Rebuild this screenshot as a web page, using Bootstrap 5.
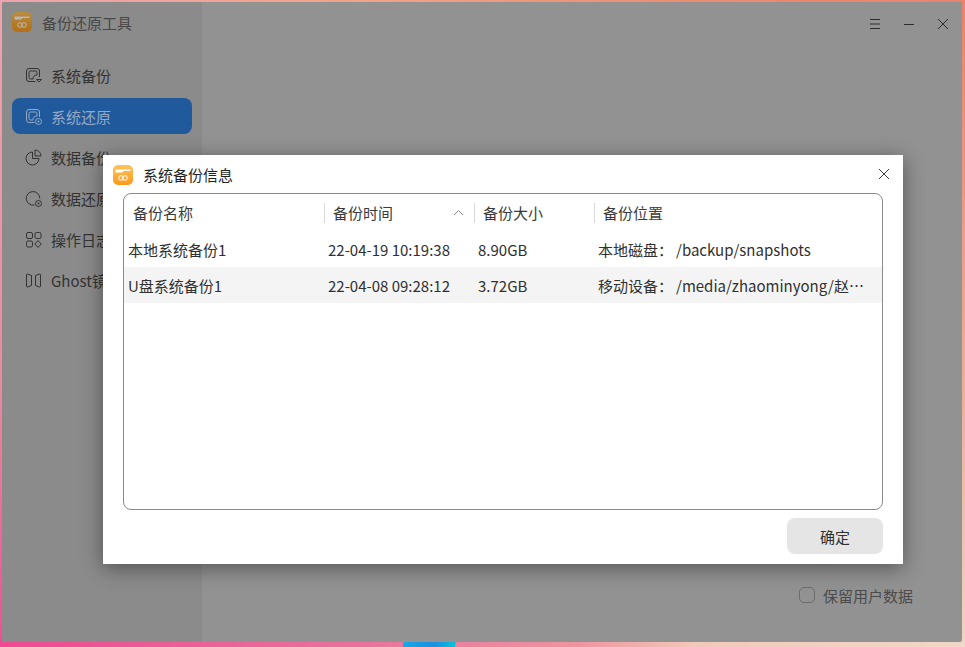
<!DOCTYPE html>
<html lang="zh-CN">

<head>
    <meta charset="UTF-8">
    <meta name="viewport" content="width=device-width, initial-scale=1.0">
    <title>备份还原工具</title>
    <link href="https://cdn.jsdelivr.net/npm/bootstrap@5.3.1/dist/css/bootstrap.min.css" rel="stylesheet">
    <style>
        html, body { height: 100%; }
        body {
            margin: 0;
            overflow: hidden;
            font-family: "Noto Sans CJK SC", "Noto Sans", sans-serif;
            font-size: 15px;
            background:
                linear-gradient(100deg, transparent 41.8%, #14a9e4 41.8%, #1a8fe0 45%, #08c3dc 47.2%, transparent 47.2%) left bottom / 100% 5px no-repeat,
                linear-gradient(90deg, #ee4a93 0%, #e9739c 38%, #ee94a0 60%, #f2c9b8 72%, #f1d8c6 100%) left bottom / 100% 8px no-repeat,
                linear-gradient(90deg, #eea3ae 0%, #f0a58a 35%, #ec8d70 70%, #e8836e 100%) left top / 100% 8px no-repeat,
                linear-gradient(180deg, #efa4ac 0%, #e88aa0 60%, #ee4f92 100%) left top / 3px 100% no-repeat,
                linear-gradient(180deg, #e8836e 0%, #e8b09a 60%, #f0d3c0 100%) right top / 3px 100% no-repeat;
        }
        .app-window {
            position: relative;
            margin: 2px 3px 5px 2px;
            height: 640px;
            border-radius: 2px;
            background: #929292;
        }
        .side-pane { width: 200px; background: #8b8b8b; }
        .app-title { height: 42px; padding: 0 0 0 10px; gap: 10px; color: #474747; }
        .app-logo-dim { margin-bottom: 2px; filter: brightness(.72); }
        .side-item { height: 36px; margin: 0 10px 5px; padding-left: 13px; gap: 9px; border-radius: 8px; color: #333; white-space: nowrap; }
        .side-item svg { flex: none; }
        .side-item span { padding-top: 2px; }
        .side-item.is-current { background: #20599c; color: #93a9c6; }
        .side-menu { padding-top: 13px; }
        .win-btns { height: 44px; padding-right: 2px; }
        .win-btn { width: 34px; height: 44px; color: #2d2d2d; }
        .keep-data { gap: 8px; padding: 0 49px 35px 0; color: #4b4b4b; }
        .keep-data span { padding-top: 2px; }
        .keep-box { width: 16px; height: 16px; border: 1px solid #6c6c6c; border-radius: 5px; }
        .info-dialog {
            position: absolute;
            left: 101px;
            top: 153px;
            width: 800px;
            height: 409px;
            background: #fff;
            box-shadow: 0 4px 20px rgba(0, 0, 0, .42);
            color: #2f2f2f;
        }
        .dlg-head { height: 38px; padding: 0 13px 0 10px; gap: 10px; color: #1f1f1f; }
        .dlg-logo { margin-top: 2px; }
        .dlg-title { padding-top: 2px; }
        .dlg-frame {
            margin: 0 20px;
            height: 317px;
            border: 1px solid #8a8a8a;
            border-radius: 8px;
            overflow: hidden;
        }
        .backup-grid { table-layout: fixed; width: 100%; margin: 0; }
        .backup-grid th, .backup-grid td { padding: 0; font-weight: 400; white-space: nowrap; }
        .backup-grid th { height: 37px; color: #3a3a3a; }
        .head-cell { height: 20px; padding: 2px 0 0 8px; border-left: 1px solid #d9d9d9; }
        .head-cell.is-first { border-left: 0; padding-left: 9px; }
        .backup-grid td { height: 36px; padding: 2px 0 0 4px; color: #303030; overflow: hidden; }
        .backup-grid tr.is-alt td { background: #f4f4f4; }
        .place-label { display: inline-block; width: 78px; }
        .sort-mark { margin: -2px 10px 0 0; }
        .ok-btn { width: 96px; height: 36px; margin: 8px 20px 0 0; background: #e5e5e5; border: 0; border-radius: 8px; color: #2f2f2f; font-size: 15px; padding: 2px 0 0; }
    </style>
</head>

<body>
    <svg width="0" height="0" class="d-block">
        <defs>
            <linearGradient id="logoBg" x1="0" y1="0" x2="0" y2="1">
                <stop offset="0" stop-color="#ffc45a" />
                <stop offset="1" stop-color="#fb9a1c" />
            </linearGradient>
            <symbol id="appLogo" viewBox="0 0 20 20">
                <rect width="20" height="20" rx="5" fill="url(#logoBg)" />
                <path d="M2.5 4.500h15v1.600h-7l-1.200 1.500H2.500z" fill="#fff" />
                <circle cx="8" cy="13" r="2.300" fill="none" stroke="#fff" stroke-width="1" />
                <circle cx="12" cy="13" r="2.300" fill="none" stroke="#fff" stroke-width="1" />
            </symbol>
        </defs>
    </svg>

    <div class="app-window d-flex overflow-hidden">
        <div class="side-pane d-flex flex-column">
            <div class="app-title d-flex align-items-center">
                <svg width="20" height="20" class="app-logo-dim"><use href="#appLogo" /></svg>
                <span>备份还原工具</span>
            </div>
            <div class="side-menu">
                <div class="side-item d-flex align-items-center">
                    <svg width="17" height="17" viewBox="0 0 17 17" fill="none" stroke="currentColor"><path d="M10.500 14.500H4A2.500 2.500 0 0 1 1.500 12V4A2.500 2.500 0 0 1 4 1.500h8A2.500 2.500 0 0 1 14.500 4v6" /><path d="M8 12H5.500A1.500 1.500 0 0 1 4 10.500v-5A1.500 1.500 0 0 1 5.500 4h5A1.500 1.500 0 0 1 12 5.500V8" /><path d="M8 12c0-2.500 1.500-4 4-4" /><path d="M11.500 12.500h5l-2.500 2.500z" /></svg>
                    <span>系统备份</span>
                </div>
                <div class="side-item is-current d-flex align-items-center">
                    <svg width="17" height="17" viewBox="0 0 17 17" fill="none" stroke="currentColor"><path d="M9.500 14.500H4A2.500 2.500 0 0 1 1.500 12V4A2.500 2.500 0 0 1 4 1.500h8A2.500 2.500 0 0 1 14.500 4v5" /><path d="M8 12H5.500A1.500 1.500 0 0 1 4 10.500v-5A1.500 1.500 0 0 1 5.500 4h5A1.500 1.500 0 0 1 12 5.500V8" /><path d="M8 12c0-2.500 1.500-4 4-4" /><circle cx="13.500" cy="13.500" r="3" /><circle cx="13.500" cy="13.500" r="1" fill="currentColor" stroke="none" /></svg>
                    <span>系统还原</span>
                </div>
                <div class="side-item d-flex align-items-center">
                    <svg width="17" height="17" viewBox="0 0 17 17" fill="none" stroke="currentColor"><path d="M7.500 3a6.500 6.500 0 1 0 6.500 6.500H7.500z" /><path d="M10 1a6 6 0 0 1 6 6h-6z" /></svg>
                    <span>数据备份</span>
                </div>
                <div class="side-item d-flex align-items-center">
                    <svg width="17" height="17" viewBox="0 0 17 17" fill="none" stroke="currentColor"><path d="M9.500 15A6.800 6.800 0 1 1 14.800 8.500" /><circle cx="13.500" cy="13.500" r="3" /><circle cx="13.500" cy="13.500" r="1" fill="currentColor" stroke="none" /></svg>
                    <span>数据还原</span>
                </div>
                <div class="side-item d-flex align-items-center">
                    <svg width="17" height="17" viewBox="0 0 17 17" fill="none" stroke="currentColor"><rect x="1.500" y="1.500" width="6" height="6" rx="1.500" /><rect x="10" y="1.500" width="6" height="6" rx="1.500" /><rect x="1.500" y="10" width="6" height="6" rx="1.500" /><path d="M13 9.500l3.200 3.500-3.200 3.500-3.200-3.500z" /></svg>
                    <span>操作日志</span>
                </div>
                <div class="side-item d-flex align-items-center">
                    <svg width="17" height="17" viewBox="0 0 17 17" fill="none" stroke="currentColor"><path d="M2.500 2l4 1.500v10l-4 1.500a1 1 0 0 1-1-1V3a1 1 0 0 1 1-1z" /><path d="M14.500 2l-4 1.500v10l4 1.500a1 1 0 0 0 1-1V3a1 1 0 0 0-1-1z" /></svg>
                    <span>Ghost镜像</span>
                </div>
            </div>
        </div>

        <div class="flex-grow-1 d-flex flex-column justify-content-between">
            <div class="win-btns d-flex justify-content-end align-items-center">
                <div class="win-btn d-flex align-items-center justify-content-center">
                    <svg width="12" height="12" viewBox="0 0 12 12" stroke="currentColor"><path d="M1 1.500h10M1 6h10M1 10.500h10" /></svg>
                </div>
                <div class="win-btn d-flex align-items-center justify-content-center">
                    <svg width="12" height="12" viewBox="0 0 12 12" stroke="currentColor"><path d="M1 6.500h10" /></svg>
                </div>
                <div class="win-btn d-flex align-items-center justify-content-center">
                    <svg width="12" height="12" viewBox="0 0 12 12" stroke="currentColor"><path d="M1 1l10 10M11 1L1 11" /></svg>
                </div>
            </div>
            <div class="keep-data d-flex justify-content-end align-items-center">
                <div class="keep-box"></div>
                <span>保留用户数据</span>
            </div>
        </div>

        <div class="info-dialog d-flex flex-column">
            <div class="dlg-head d-flex align-items-center">
                <svg width="20" height="20" class="dlg-logo"><use href="#appLogo" /></svg>
                <span class="dlg-title flex-grow-1">系统备份信息</span>
                <svg width="12" height="12" viewBox="0 0 12 12" stroke="#3c3c3c"><path d="M1 1l10 10M11 1L1 11" /></svg>
            </div>
            <div class="dlg-frame">
                <table class="backup-grid">
                    <colgroup>
                        <col style="width: 200px">
                        <col style="width: 150px">
                        <col style="width: 120px">
                        <col>
                    </colgroup>
                    <thead>
                        <tr>
                            <th><div class="head-cell is-first d-flex align-items-center">备份名称</div></th>
                            <th>
                                <div class="head-cell d-flex align-items-center justify-content-between">
                                    <span>备份时间</span>
                                    <svg class="sort-mark" width="11" height="7" viewBox="0 0 11 7" fill="none" stroke="#8c8c8c"><path d="M1 6l4.500-4.500L10 6" /></svg>
                                </div>
                            </th>
                            <th><div class="head-cell d-flex align-items-center">备份大小</div></th>
                            <th><div class="head-cell d-flex align-items-center">备份位置</div></th>
                        </tr>
                    </thead>
                    <tbody>
                        <tr>
                            <td>本地系统备份1</td>
                            <td>22-04-19 10:19:38</td>
                            <td>8.90GB</td>
                            <td><span class="place-label">本地磁盘：</span><span>/backup/snapshots</span></td>
                        </tr>
                        <tr class="is-alt">
                            <td>U盘系统备份1</td>
                            <td>22-04-08 09:28:12</td>
                            <td>3.72GB</td>
                            <td><span class="place-label">移动设备：</span><span>/media/zhaominyong/赵…</span></td>
                        </tr>
                    </tbody>
                </table>
            </div>
            <div class="d-flex justify-content-end">
                <button type="button" class="ok-btn">确定</button>
            </div>
        </div>
    </div>

    <script src="https://cdn.jsdelivr.net/npm/bootstrap@5.3.1/dist/js/bootstrap.bundle.min.js"></script>
</body>

</html>
